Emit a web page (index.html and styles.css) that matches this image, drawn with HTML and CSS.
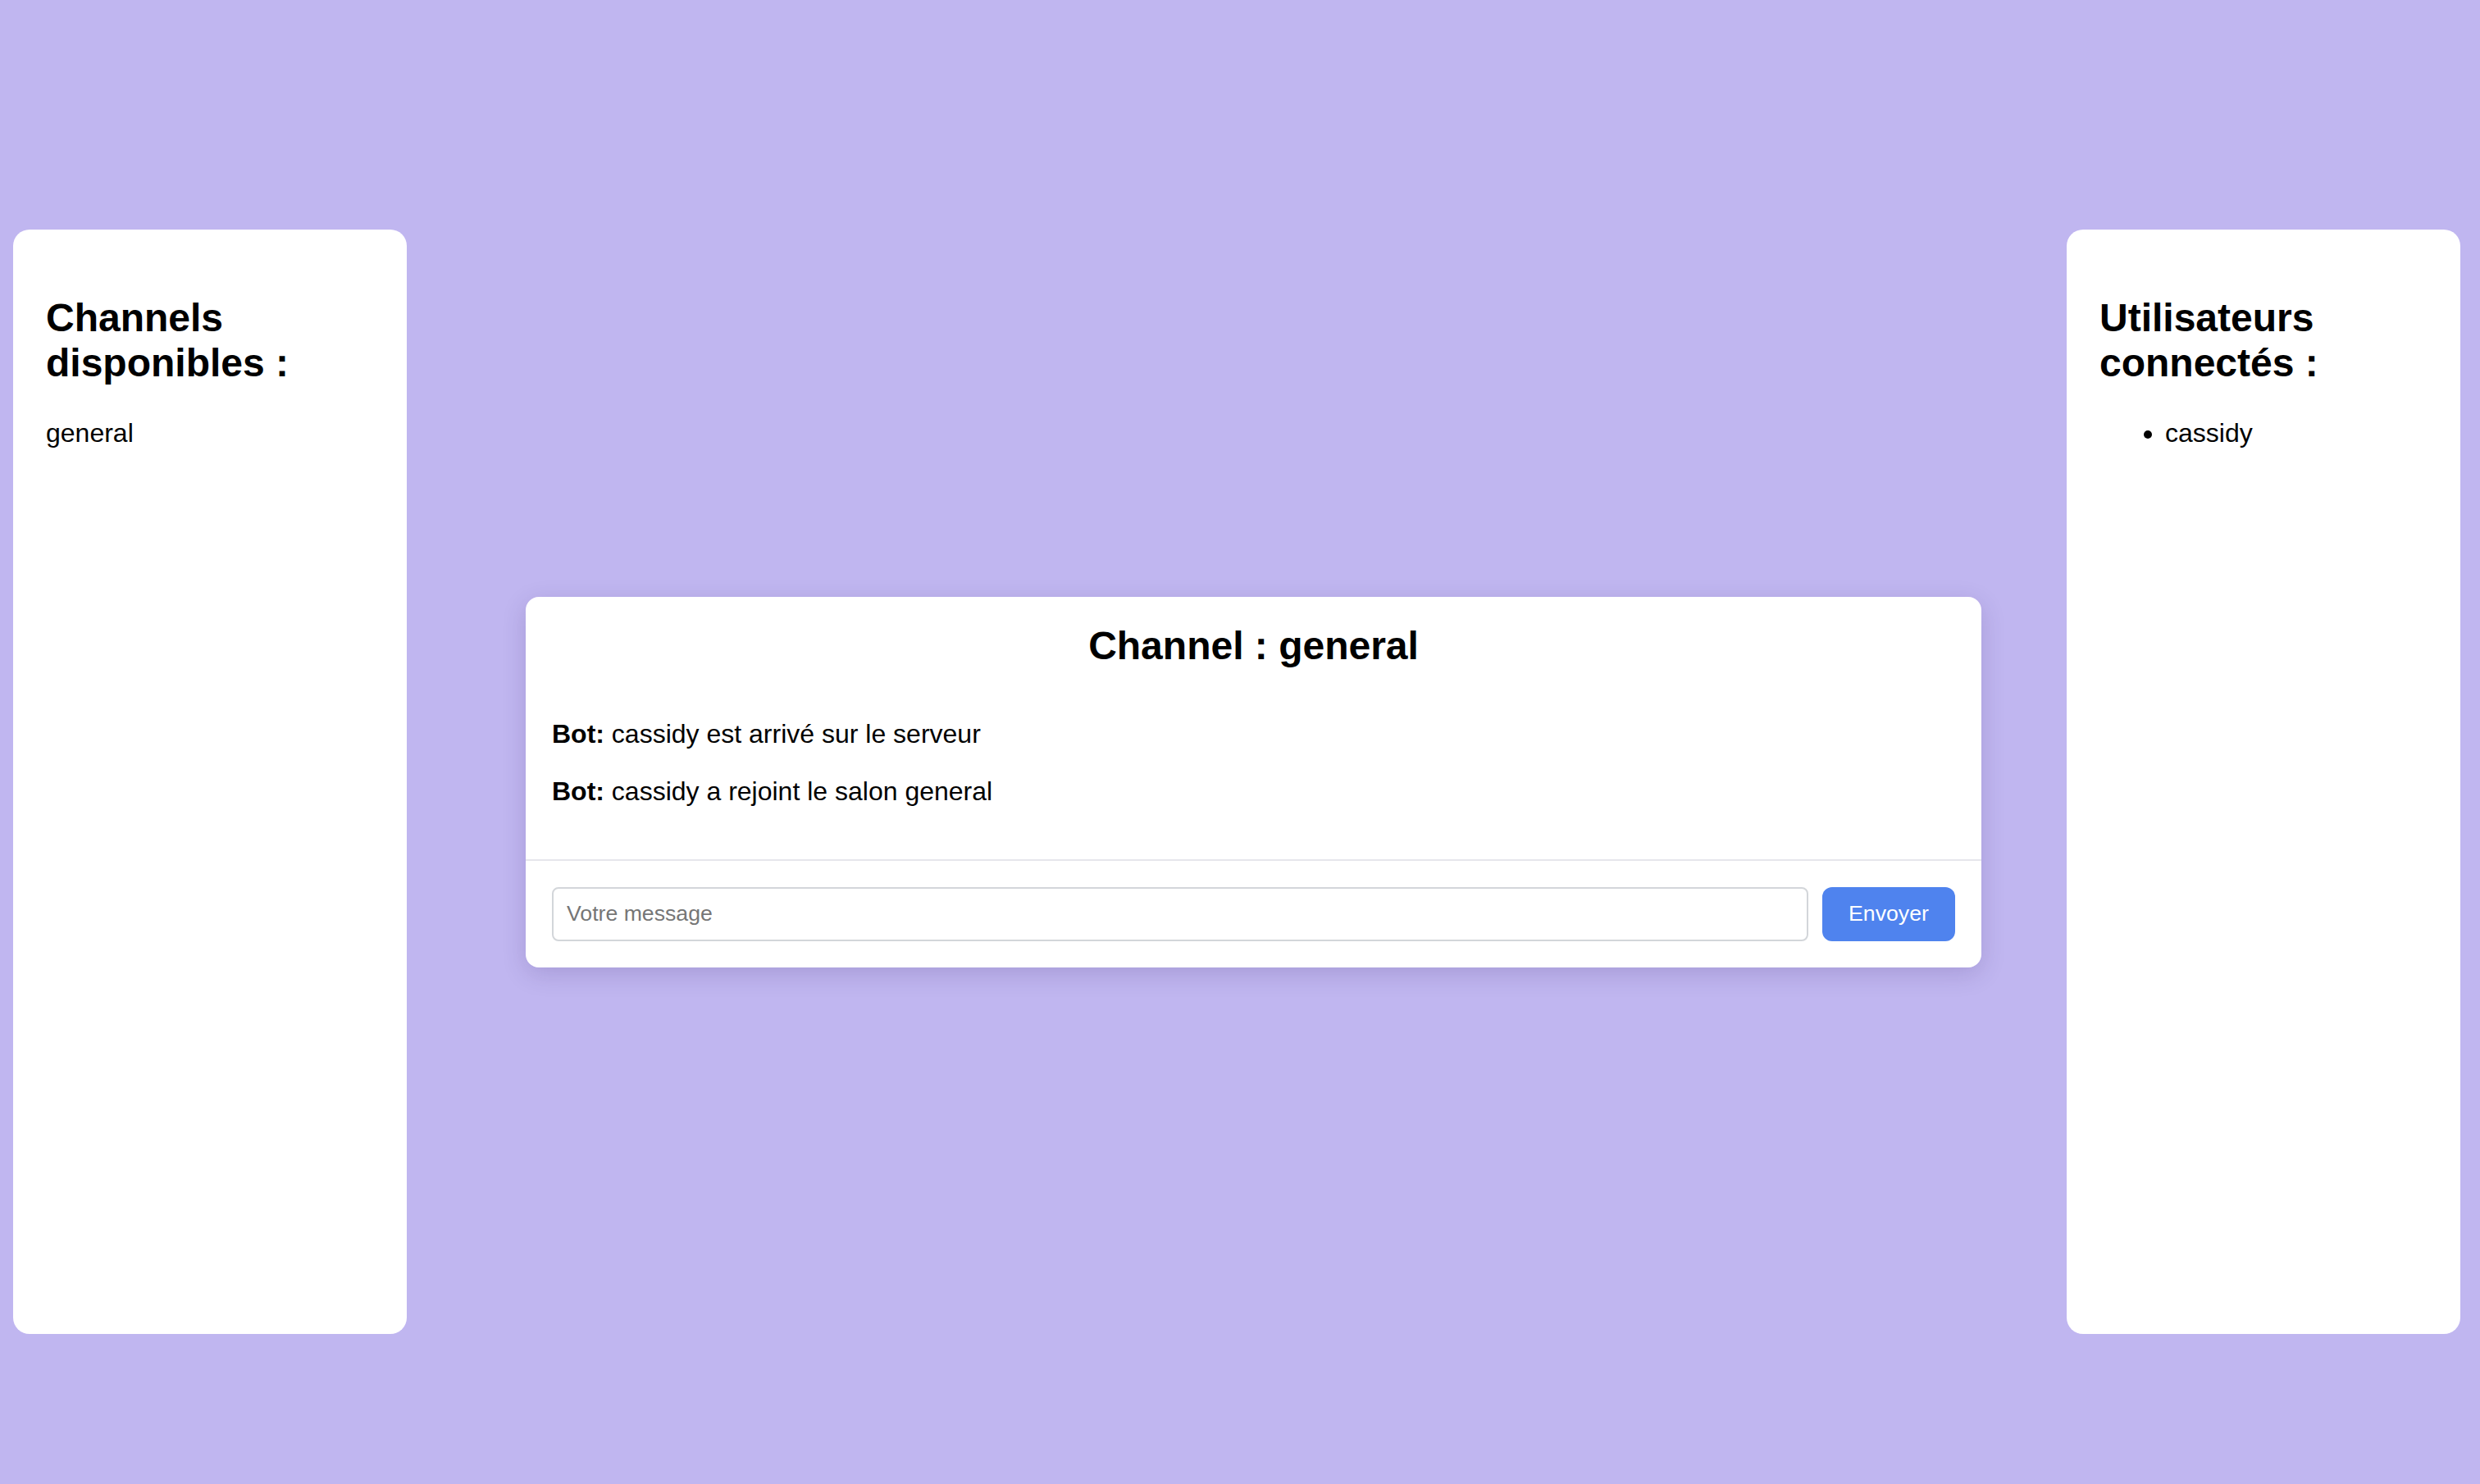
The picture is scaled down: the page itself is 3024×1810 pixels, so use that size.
FILE: index.html
```html
<!DOCTYPE html>
<html lang="fr">
<head>
<meta charset="utf-8">
<title>Chat</title>
<link rel="stylesheet" href="styles.css">
</head>
<body>
<div class="layout">
  <aside class="side-card">
    <h2 class="side-title">Channels disponibles :</h2>
    <div class="channel">general</div>
  </aside>
  <main class="chat-card">
    <div class="chat-header">
      <h2 class="chat-title">Channel : general</h2>
    </div>
    <div class="messages">
      <p class="message"><strong>Bot:</strong> cassidy est arrivé sur le serveur</p>
      <p class="message"><strong>Bot:</strong> cassidy a rejoint le salon general</p>
    </div>
    <form class="composer">
      <input class="composer-input" type="text" placeholder="Votre message">
      <button class="composer-button" type="button">Envoyer</button>
    </form>
  </main>
  <aside class="side-card side-card-right">
    <h2 class="side-title">Utilisateurs connectés :</h2>
    <ul class="user-list">
      <li>cassidy</li>
    </ul>
  </aside>
</div>
</body>
</html>
```

FILE: styles.css
```css
html, body {
  margin: 0;
  padding: 0;
}

body {
  background: #c0b6f0;
  font-family: "Liberation Sans", Arial, sans-serif;
  color: #000;
  width: 3024px;
  height: 1810px;
  overflow: hidden;
}

.layout {
  display: flex;
  align-items: center;
  padding: 280px 0 0 16px;
}

.side-card {
  box-sizing: border-box;
  width: 480px;
  height: 1347px;
  flex: none;
  background: #fff;
  border-radius: 20px;
  padding: 40px;
}

.side-card-right {
  margin-left: 104px;
}

.side-title {
  font-size: 48px;
  font-weight: bold;
  line-height: 55px;
  margin: 40px 0 40px;
}

.channel {
  font-size: 32px;
  line-height: 37px;
}

.user-list {
  margin: 0;
  padding-left: 80px;
  font-size: 32px;
  line-height: 37px;
}

.chat-card {
  box-sizing: border-box;
  width: 1775px;
  flex: none;
  margin-left: 145px;
  background: #fff;
  border-radius: 16px;
  box-shadow: 0 8px 30px rgba(40, 20, 90, 0.16);
  display: flex;
  flex-direction: column;
}

.chat-header {
  padding: 32px 32px 0;
}

.chat-title {
  margin: 0;
  text-align: center;
  font-size: 48px;
  font-weight: bold;
  line-height: 55px;
}

.messages {
  padding: 62px 32px 64px;
}

.message {
  margin: 0;
  font-size: 32px;
  line-height: 37px;
}

.message + .message {
  margin-top: 33px;
}

.composer {
  margin: 0;
  display: flex;
  gap: 17px;
  padding: 32px;
  border-top: 2px solid #e6e6ec;
}

.composer-input {
  flex: 1;
  box-sizing: border-box;
  height: 66px;
  border: 2px solid #d3d6da;
  border-radius: 8px;
  padding: 0 16px;
  font-family: "Liberation Sans", Arial, sans-serif;
  font-size: 26.67px;
  color: #000;
  outline: none;
}

.composer-input::placeholder {
  color: #767676;
}

.composer-button {
  box-sizing: border-box;
  width: 162px;
  height: 66px;
  border: none;
  border-radius: 12px;
  background: #4f83ee;
  color: #fff;
  font-family: "Liberation Sans", Arial, sans-serif;
  font-size: 26.67px;
  padding: 0;
}
```
